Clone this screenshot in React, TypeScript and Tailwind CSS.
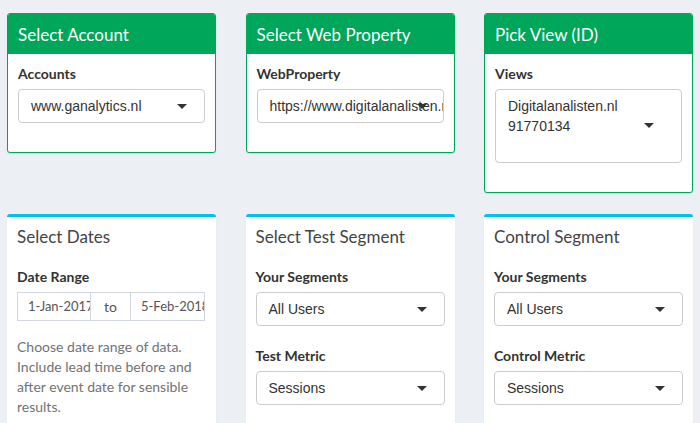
import React from "react";

const font = { fontFamily: "Lato, 'Open Sans', sans-serif" };
const arial = { fontFamily: "'Liberation Sans', Arial, sans-serif" };

const Caret = ({ className }: { className?: string }) => (
  <span
    className={
      "absolute w-0 h-0 border-x-[5px] border-x-transparent border-t-[5px] border-t-[#333] " +
      (className ?? "right-[17px] top-1/2 -mt-[2px]")
    }
  />
);

const SelectBox = ({ lines, tall }: { lines: string[]; tall?: boolean }) => (
  <div
    className={
      "relative bg-white border border-[#ccc] rounded-[4px] pl-[12px] pr-[24px] overflow-hidden " +
      (tall ? "h-[74px] pt-[6px]" : "h-[34px] flex items-center")
    }
  >
    <div className="text-[14px] leading-[20px] text-[#333] whitespace-nowrap" style={arial}>
      {lines.map((l) => (
        <div key={l}>{l}</div>
      ))}
    </div>
    {tall ? <Caret className="right-[27px] top-[33px]" /> : <Caret />}
  </div>
);

const Label = ({ children }: { children: React.ReactNode }) => (
  <div className="text-[14px] font-bold text-[#333] leading-[20px] mb-[5px]">{children}</div>
);

const GreenBox = ({ title, children }: { title: string; children: React.ReactNode }) => (
  <div className="w-[209px] bg-white border border-[#00a65a] rounded-[3px] shadow-[0_1px_1px_rgba(0,0,0,0.1)] overflow-hidden">
    <div className="bg-[#00a65a] h-[40px] px-[10px] flex items-center">
      <h3 className="text-white text-[17px] leading-none">{title}</h3>
    </div>
    <div className="px-[10px] pt-[10px] pb-[29px]">{children}</div>
  </div>
);

const BlueBox = ({ title, children }: { title: string; children: React.ReactNode }) => (
  <div className="w-[209px] bg-white border-t-[3px] border-t-[#00c0ef] rounded-[3px] shadow-[0_1px_1px_rgba(0,0,0,0.1)]">
    <div className="px-[10px] h-[38px] flex items-center">
      <h3 className="text-[#444] text-[17px] leading-none">{title}</h3>
    </div>
    <div className="px-[10px] pt-[12px] pb-[30px]">{children}</div>
  </div>
);

export default function App() {
  return (
    <div className="w-[700px] h-[423px] overflow-hidden bg-[#ecf0f5] pl-[7px] pt-[13px]" style={font}>
      <div className="flex gap-[29.5px] items-start">
        <GreenBox title="Select Account">
          <Label>Accounts</Label>
          <SelectBox lines={["www.ganalytics.nl"]} />
        </GreenBox>
        <GreenBox title="Select Web Property">
          <Label>WebProperty</Label>
          <div className="relative">
            <div className="bg-white border border-[#ccc] rounded-[4px] pl-[12px] h-[34px] flex items-center overflow-hidden">
              <span className="text-[14px] text-[#333] whitespace-nowrap" style={arial}>
                https://www.digitalanalisten.nl
              </span>
            </div>
            <Caret />
          </div>
        </GreenBox>
        <GreenBox title="Pick View (ID)">
          <Label>Views</Label>
          <SelectBox lines={["Digitalanalisten.nl", "91770134"]} tall />
        </GreenBox>
      </div>

      <div className="flex gap-[29.5px] items-start mt-[21px]">
        <BlueBox title="Select Dates">
          <Label>Date Range</Label>
          <div className="flex h-[29px] w-[188px] text-[13px] leading-[27px] text-[#555]">
            <div className="w-[74px] border border-[#d2d6de] px-[10px] text-center overflow-hidden whitespace-nowrap">
              1-Jan-2017
            </div>
            <div className="w-[39px] border-y border-[#d2d6de] text-center text-[14px]">to</div>
            <div className="flex-1 min-w-0 border border-[#d2d6de] px-[10px] text-center overflow-hidden whitespace-nowrap">
              5-Feb-2018
            </div>
          </div>
          <p className="mt-[16px] text-[14px] leading-[20px] text-[#737373]">
            Choose date range of data. Include lead time before and after event date for sensible results.
          </p>
        </BlueBox>
        <BlueBox title="Select Test Segment">
          <Label>Your Segments</Label>
          <SelectBox lines={["All Users"]} />
          <div className="mt-[20px]">
            <Label>Test Metric</Label>
            <SelectBox lines={["Sessions"]} />
          </div>
        </BlueBox>
        <BlueBox title="Control Segment">
          <Label>Your Segments</Label>
          <SelectBox lines={["All Users"]} />
          <div className="mt-[20px]">
            <Label>Control Metric</Label>
            <SelectBox lines={["Sessions"]} />
          </div>
        </BlueBox>
      </div>
    </div>
  );
}
